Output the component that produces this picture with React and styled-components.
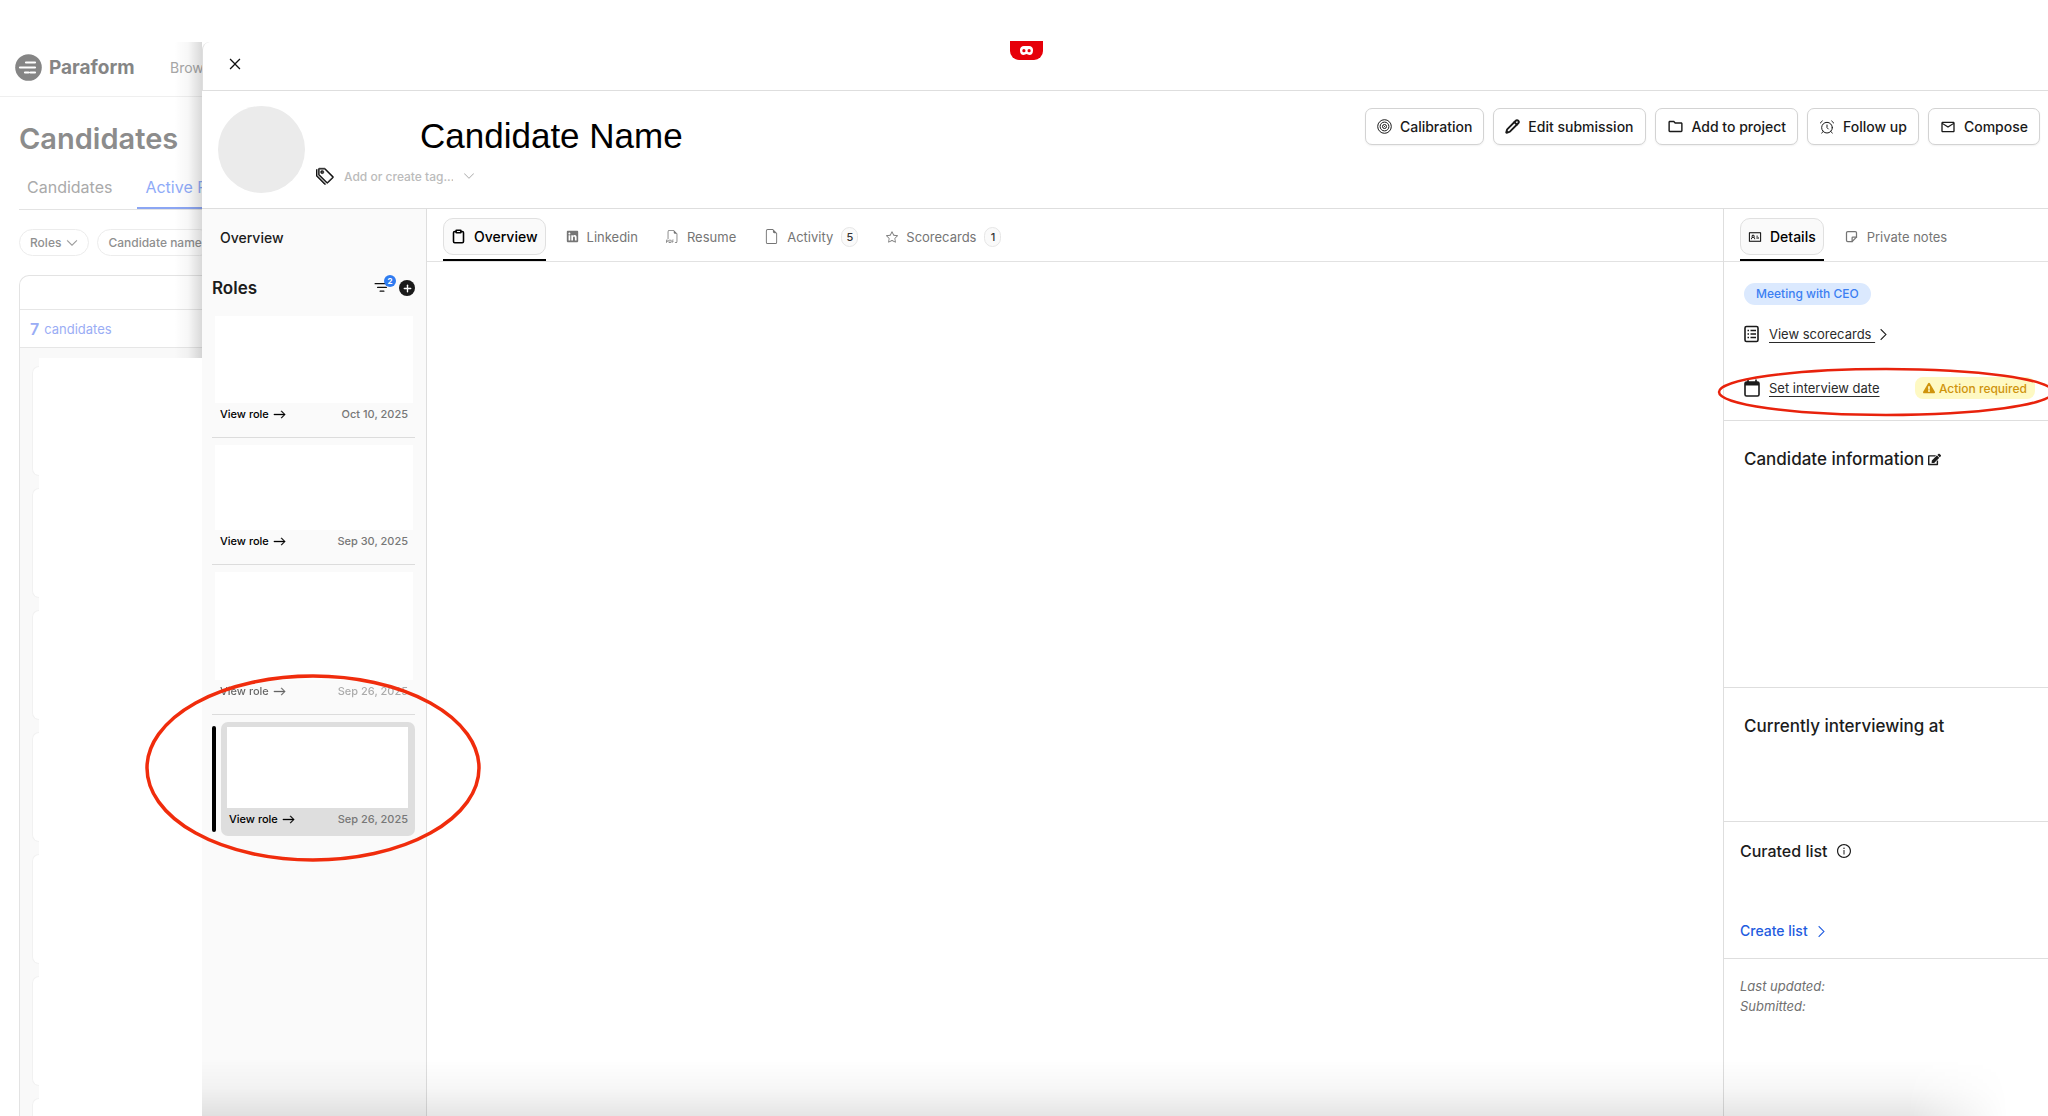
import { createGlobalStyle, styled } from "styled-components";
import { AiOutlineClose, AiOutlineIdcard, AiOutlineInfoCircle } from "react-icons/ai";
import { BsArrowRight, BsChevronDown, BsChevronRight, BsFileEarmark, BsFiletypePdf, BsFilter, BsStar, BsTags } from "react-icons/bs";
import { FaEdit, FaExclamationTriangle, FaLinkedin } from "react-icons/fa";
import { MdMailOutline, MdOutlineFolder } from "react-icons/md";
import { TbNote } from "react-icons/tb";
import { AlarmClock, Clipboard, Pencil, Plus } from "lucide-react";

const GlobalStyle = createGlobalStyle`
  * {
    box-sizing: border-box;
  }
  body {
    margin: 0;
    background: #fff;
    color: #1c1c1c;
    font-family: Inter, "Liberation Sans", sans-serif;
    font-size: 14px;
    overflow-x: hidden;
  }
  button, input {
    font-family: inherit;
  }
  h1, h2, h3, p {
    margin: 0;
  }
  svg {
    display: block;
    flex-shrink: 0;
  }
`;

const Page = styled.div`
  position: relative;
  display: flex;
  min-height: 100vh;
  padding-top: 42px;
  overflow: hidden;
`;

const CameraTab = styled.div`
  position: absolute;
  top: 41px;
  left: 50%;
  width: 33px;
  height: 19px;
  margin-left: -14px;
  border-radius: 0 0 9px 9px;
  background: #e60009;
  display: flex;
  align-items: center;
  justify-content: center;
  z-index: 3;
`;

/* Dimmed page behind the drawer */
const Backdrop = styled.div`
  position: relative;
  flex: 0 0 202px;
  min-width: 0;
  display: flex;
  flex-direction: column;
  overflow: hidden;
  white-space: nowrap;

  &::after {
    content: "";
    position: absolute;
    top: 0;
    right: 0;
    width: 28px;
    height: 316px;
    background: linear-gradient(to right, rgba(0, 0, 0, 0), rgba(0, 0, 0, 0.03) 50%, rgba(0, 0, 0, 0.15));
  }
`;

const SiteHeader = styled.header`
  display: flex;
  align-items: center;
  height: 55px;
  padding: 0 0 4px 15px;
  border-bottom: 1px solid #efefef;
`;

const Brand = styled.a`
  display: flex;
  flex: 0 0 155px;
  align-items: center;
  gap: 7px;
  color: #858585;
  font-size: 19px;
  font-weight: 700;
  text-decoration: none;
`;

const SiteLink = styled.a`
  color: #a6a6a6;
  text-decoration: none;
`;

const PageTitle = styled.h1`
  padding: 22px 0 0 19px;
  color: #8c8c8c;
  font-size: 29px;
  line-height: 40px;
  font-weight: 600;
`;

const PageTabs = styled.nav`
  display: flex;
  margin: 9px 0 0 19px;
  height: 42px;
  border-bottom: 1px solid #e3e3e3;
`;

const PageTab = styled.a`
  flex-shrink: 0;
  padding: 9px 8px 0;
  margin-right: 17px;
  height: 41px;
  color: ${(props) => (props.$active ? "#8fabf8" : "#aaaaaa")};
  border-bottom: 2px solid ${(props) => (props.$active ? "#8ca6f3" : "transparent")};
  font-size: 16px;
  line-height: 20px;
  text-decoration: none;
`;

const Filters = styled.div`
  display: flex;
  gap: 8px;
  margin: 19px 0 0 19px;
`;

const FilterPill = styled.button`
  display: flex;
  flex-shrink: 0;
  align-items: center;
  gap: 5px;
  height: 27px;
  padding: 0 10px;
  border: 1px solid #ececec;
  border-radius: 14px;
  background: #fff;
  color: #8f8f8f;
  font-size: 12px;
  font-weight: 500;
`;

const Board = styled.section`
  flex: 1;
  display: flex;
  flex-direction: column;
  margin: 19px 0 0 19px;
  border: 1px solid #e3e3e3;
  border-width: 1px 0 0 1px;
  border-top-left-radius: 10px;
  overflow: hidden;
`;

const BoardHead = styled.div`
  height: 34px;
  border-bottom: 1px solid #e6e6e6;
`;

const BoardCount = styled.div`
  display: flex;
  align-items: center;
  gap: 5px;
  height: 38px;
  padding-left: 10px;
  border-bottom: 1px solid #e6e6e6;
  color: #9aadf5;
  font-size: 13px;

  b {
    font-size: 16px;
    font-weight: 600;
  }
`;

const BoardBody = styled.div`
  flex: 1;
  display: flex;
  padding-top: 10px;
  background: #f9f9f9;
`;

/* only the left edge of the cards shows */
const BoardCards = styled.div`
  flex: 0 0 19px;
  height: 0;
  padding: 8px 0 0 12px;
  display: flex;
  flex-direction: column;
  gap: 12px;
`;

const BoardCard = styled.div`
  flex: 0 0 110px;
  border: 1px solid #f1f1f1;
  border-right: 0;
  border-radius: 8px 0 0 8px;
  background: #fff;
`;

const BoardBlank = styled.div`
  flex: 1;
  background: #fff;
`;

const Drawer = styled.div`
  position: relative;
  flex: 1;
  min-width: 0;
  display: flex;
  flex-direction: column;
  border-top-left-radius: 8px;
  background: #fff;
`;

const DrawerBar = styled.div`
  display: flex;
  align-items: center;
  height: 49px;
  padding: 0 24px 4px;
  border-bottom: 1px solid #dedede;
  border-left: 1px solid #dedede;
  border-top-left-radius: 8px;
`;

const IconButton = styled.button`
  padding: 0;
  border: 0;
  background: none;
  color: #111;
`;

const Profile = styled.header`
  display: flex;
  align-items: flex-start;
  gap: 11px;
  height: 118px;
  padding: 15px 8px 0 16px;
  border-bottom: 1px solid #dedede;
`;

const Avatar = styled.div`
  flex: 0 0 87px;
  height: 87px;
  border-radius: 50%;
  background: #ebebeb;
`;

const Identity = styled.div`
  flex: 1;
`;

const CandidateName = styled.h1`
  padding: 10px 0 0 104px;
  color: #000;
  font-family: "Liberation Sans", sans-serif;
  font-size: 35px;
  line-height: 40px;
  font-weight: 400;
`;

const TagField = styled.label`
  display: flex;
  align-items: center;
  gap: 10px;
  margin-top: 10px;
  color: #111;

  input {
    width: 109px;
    height: 20px;
    padding: 0;
    border: 0;
    outline: 0;
    font-size: 12px;
    font-weight: 500;
  }
  input::placeholder {
    color: #bbb;
    opacity: 1;
  }
  svg:last-child {
    color: #aaa;
  }
`;

const Actions = styled.div`
  display: flex;
  gap: 9px;
  padding-top: 2px;
`;

const ActionButton = styled.button`
  display: flex;
  align-items: center;
  gap: 8px;
  height: 37px;
  padding: 0 11px;
  border: 1px solid #d3d3d3;
  border-radius: 7px;
  background: #fff;
  box-shadow: 0 1px 2px rgba(0, 0, 0, 0.06);
  color: #1a1a1a;
  font-size: 14px;
  font-weight: 500;
  white-space: nowrap;
`;

const DrawerBody = styled.div`
  flex: 1;
  display: flex;
`;

const Sidebar = styled.aside`
  flex: 0 0 225px;
  padding: 0 11px 0 10px;
  border-right: 1px solid #dedede;
  background: #fafafa;
`;

const SidebarLink = styled.a`
  display: block;
  padding: 19px 8px 0;
  color: #1c1c1c;
  font-size: 14px;
  line-height: 20px;
  font-weight: 500;
  text-decoration: none;
`;

const SidebarHead = styled.div`
  display: flex;
  align-items: center;
  height: 24px;
  margin: 28px 0 16px;
`;

const SidebarTitle = styled.h2`
  flex: 1;
  font-size: 17px;
  font-weight: 600;
`;

const FilterButton = styled(IconButton)`
  position: relative;
  margin-right: 7px;
`;

const FilterCount = styled.span`
  position: absolute;
  top: -3px;
  right: -4px;
  width: 12px;
  height: 12px;
  border-radius: 50%;
  background: #2f7bf0;
  color: #fff;
  font-size: 8px;
  line-height: 12px;
  font-weight: 700;
`;

const AddButton = styled.button`
  display: flex;
  align-items: center;
  justify-content: center;
  width: 16px;
  height: 16px;
  padding: 0;
  border: 0;
  border-radius: 50%;
  background: #1a1a1a;
  color: #fff;
`;

const RoleItem = styled.article`
  position: relative;
  display: flex;
  padding-bottom: ${(props) => (props.$selected ? "0" : "12px")};
  margin-bottom: ${(props) => (props.$selected ? "0" : "7px")};
  border-bottom: ${(props) => (props.$selected ? "0" : "1px solid #dcdcdc")};
`;

const SelectedBar = styled.div`
  width: 4px;
  margin: 4px 5px 4px 0;
  border-radius: 2px;
  background: #000;
`;

const RoleCard = styled.div`
  flex: 1;
  padding: ${(props) => (props.$selected ? "5px 7px 6px 6px" : "0 2px 0 3px")};
  border-radius: 7px;
  background: ${(props) => (props.$selected ? "#dedede" : "transparent")};
`;

const RoleSummary = styled.div`
  height: ${(props) => props.$height}px;
  background: #fff;
`;

const RoleFoot = styled.div`
  display: flex;
  align-items: center;
  justify-content: space-between;
  height: 22px;
  padding: ${(props) => (props.$selected ? "0 0 0 2px" : "0 5px")};
  color: #777;
  font-size: 11px;
  font-weight: 500;
  opacity: ${(props) => (props.$faded ? "0.6" : "1")};
`;

const RoleLink = styled.a`
  display: flex;
  align-items: center;
  gap: 4px;
  color: #000;
  text-decoration: none;
`;

const RoleMark = styled.svg`
  position: absolute;
  top: -49px;
  left: -69px;
  z-index: 2;
  pointer-events: none;
`;

const Main = styled.main`
  flex: 1;
  min-width: 0;
`;

const Tabs = styled.nav`
  display: flex;
  gap: 12px;
  height: 53px;
  padding: 9px 16px 0;
  border-bottom: 1px solid #e2e2e2;
`;

const TabSlot = styled.div`
  height: 43px;
  border-bottom: 2px solid ${(props) => (props.$active ? "#000" : "transparent")};
`;

const Tab = styled.button`
  display: flex;
  align-items: center;
  gap: 8px;
  height: 37px;
  padding: 0 7px;
  border: 1px solid ${(props) => (props.$active ? "#e0e0e0" : "transparent")};
  border-radius: 10px;
  background: ${(props) => (props.$active ? "#fafafa" : "none")};
  color: ${(props) => (props.$active ? "#000" : "#757575")};
  font-size: ${(props) => (props.$active ? "14px" : "13px")};
  font-weight: ${(props) => (props.$active ? "500" : "400")};
  white-space: nowrap;
`;

const Count = styled.span`
  min-width: 17px;
  height: 20px;
  border: 1px solid #e6e6e6;
  border-radius: 9px;
  background: #fafafa;
  color: #333;
  font-size: 11px;
  line-height: 18px;
  font-weight: 500;
  text-align: center;
`;

const Details = styled.aside`
  flex: 0 0 325px;
  min-width: 0;
  border-left: 1px solid #dedede;
`;

const Section = styled.section`
  position: relative;
  height: ${(props) => props.$height}px;
  padding: ${(props) => props.$top}px 13px 0 ${(props) => (props.$wide ? "20px" : "16px")};
  border-bottom: 1px solid #dedede;
`;

const StageBadge = styled.span`
  display: inline-block;
  height: 22px;
  padding: 0 12px;
  border-radius: 11px;
  background: #dbe9fe;
  color: #3c7ff2;
  font-size: 12px;
  line-height: 22px;
  font-weight: 500;
`;

const DetailRow = styled.div`
  display: flex;
  align-items: center;
  height: 22px;
  margin-top: ${(props) => props.$gap}px;
`;

const DetailLink = styled.a`
  margin: 0 2px 0 9px;
  color: #2a2a2a;
  font-size: 13px;
  text-decoration: underline;
  text-underline-offset: 3px;
  white-space: pre;
`;

const Warning = styled.span`
  display: flex;
  align-items: center;
  gap: 4px;
  height: 22px;
  margin-left: auto;
  padding: 0 8px;
  border-radius: 8px;
  background: #fef9c3;
  color: #cf930c;
  font-size: 12px;
  font-weight: 500;
  white-space: nowrap;
`;

const DateMark = styled.svg`
  position: absolute;
  top: 105px;
  left: -8px;
  pointer-events: none;
`;

const SectionTitle = styled.h3`
  display: flex;
  align-items: center;
  gap: ${(props) => (props.$small ? "8px" : "4px")};
  font-size: ${(props) => (props.$small ? "16px" : "17px")};
  line-height: 24px;
  font-weight: 500;
`;

const CreateLink = styled.a`
  display: flex;
  align-items: center;
  gap: 7px;
  margin-top: 58px;
  color: #1f5ce0;
  font-size: 14px;
  line-height: 20px;
  font-weight: 500;
  text-decoration: none;
`;

const Meta = styled.div`
  padding: 17px 16px 0;
  color: #707070;
  font-size: 13px;
  line-height: 20px;
  font-style: italic;
`;

const BottomShade = styled.div`
  position: absolute;
  right: 0;
  bottom: 0;
  left: 0;
  height: 56px;
  background: linear-gradient(to bottom, rgba(0, 0, 0, 0), rgba(0, 0, 0, 0.03) 50%, rgba(0, 0, 0, 0.1));
  mask-image: linear-gradient(to right, #000 0, #000 calc(100% - 140px), transparent calc(100% - 40px));
  pointer-events: none;
`;

const LogoMark = () => (
  <svg width="27" height="27" viewBox="0 0 27 27">
    <circle cx="13.5" cy="13.5" r="13.3" fill="#858585" />
    <path d="M11 8.5h9M5 13.5h15M10 18.5h3.500M15.500 18.500h4.500" stroke="#fff" strokeWidth="2.2" strokeLinecap="round" />
  </svg>
);

const MaskIcon = () => (
  <svg width="13" height="9" viewBox="0 0 13 9">
    <path d="M4 0h5a4 4 0 0 1 4 4.5C13 7.5 11.5 9 9.5 9c-1.4 0-2-1-3-1s-1.6 1-3 1C1.500 9 0 7.5 0 4.5A4 4 0 0 1 4 0Z" fill="#fff" />
    <circle cx="3.9" cy="4.7" r="1.6" fill="#e60009" />
    <circle cx="9.1" cy="4.7" r="1.6" fill="#e60009" />
  </svg>
);

const TargetIcon = () => (
  <svg width="15" height="15" viewBox="0 0 15 15" fill="none" stroke="currentColor">
    <circle cx="7.5" cy="7.5" r="6.8" />
    <circle cx="7.5" cy="7.5" r="4.4" />
    <circle cx="7.5" cy="7.5" r="2" />
    <circle cx="7.5" cy="7.5" r="0.6" fill="currentColor" stroke="none" />
  </svg>
);

const ScorecardIcon = () => (
  <svg width="16" height="18" viewBox="0 0 16 18" fill="none" stroke="#1a1a1a">
    <rect x="1" y="1.5" width="13" height="15" rx="1.5" strokeWidth="1.6" />
    <path d="M6.5 5.5H12M6.5 9H12M6.5 12.5H12M3.5 5.5H5M3.5 9H5M3.5 12.5H5" strokeWidth="1.4" />
  </svg>
);

const CalendarIcon = () => (
  <svg width="16" height="18" viewBox="0 0 16 18" fill="none" stroke="#1a1a1a">
    <rect x="1" y="3" width="14" height="14" rx="1.5" strokeWidth="1.6" />
    <path d="M1 3h14v3.5H1z" fill="#1a1a1a" stroke="none" />
    <path d="M4 0.5v3M12 0.5v3" strokeWidth="1.6" />
  </svg>
);

const actions = [
  { label: "Calibration", icon: <TargetIcon /> },
  { label: "Edit submission", icon: <Pencil size={15} strokeWidth={3} /> },
  { label: "Add to project", icon: <MdOutlineFolder size={17} /> },
  { label: "Follow up", icon: <AlarmClock size={16} strokeWidth={1.5} /> },
  { label: "Compose", icon: <MdMailOutline size={16} /> },
];

const tabs = [
  { label: "Overview", icon: <Clipboard size={15} strokeWidth={2.5} />, active: true },
  { label: "Linkedin", icon: <FaLinkedin size={13} /> },
  { label: "Resume", icon: <BsFiletypePdf size={13} /> },
  { label: "Activity", icon: <BsFileEarmark size={15} />, count: 5 },
  { label: "Scorecards", icon: <BsStar size={12} />, count: 1 },
];

const detailTabs = [
  { label: "Details", icon: <AiOutlineIdcard size={14} />, active: true },
  { label: "Private notes", icon: <TbNote size={15} /> },
];

const roles = [
  { id: 1, date: "Oct 10, 2025", height: 87 },
  { id: 2, date: "Sep 30, 2025", height: 85 },
  { id: 3, date: "Sep 26, 2025", height: 108, faded: true },
  { id: 4, date: "Sep 26, 2025", height: 81, selected: true },
];

function TabBar({ items }) {
  return (
    <Tabs>
      {items.map((tab) => (
        <TabSlot key={tab.label} $active={tab.active}>
          <Tab $active={tab.active}>
            {tab.icon}
            {tab.label}
            {tab.count && <Count>{tab.count}</Count>}
          </Tab>
        </TabSlot>
      ))}
    </Tabs>
  );
}

function Role({ date, height, faded, selected }) {
  return (
    <RoleItem $selected={selected}>
      {selected && <SelectedBar />}
      <RoleCard $selected={selected}>
        <RoleSummary $height={height} />
        <RoleFoot $selected={selected} $faded={faded}>
          <RoleLink href="#">
            View role <BsArrowRight size={13} strokeWidth={0.5} />
          </RoleLink>
          <time>{date}</time>
        </RoleFoot>
      </RoleCard>
      {selected && (
        <RoleMark width="340" height="190" viewBox="0 0 340 190" fill="none">
          <ellipse cx="170" cy="95" rx="166" ry="92" stroke="#f02c0c" strokeWidth="3.5" />
        </RoleMark>
      )}
    </RoleItem>
  );
}

function CandidatesPage() {
  return (
    <Backdrop>
      <SiteHeader>
        <Brand href="#">
          <LogoMark />
          Paraform
        </Brand>
        <SiteLink href="#">Browse</SiteLink>
      </SiteHeader>
      <PageTitle>Candidates</PageTitle>
      <PageTabs>
        <PageTab href="#">Candidates</PageTab>
        <PageTab href="#" $active>
          Active Roles
        </PageTab>
      </PageTabs>
      <Filters>
        <FilterPill>
          Roles <BsChevronDown size={12} strokeWidth={0.5} />
        </FilterPill>
        <FilterPill>Candidate name</FilterPill>
      </Filters>
      <Board>
        <BoardHead />
        <BoardCount>
          <b>7</b> candidates
        </BoardCount>
        <BoardBody>
          <BoardCards>
            {[1, 2, 3, 4, 5, 6, 7].map((n) => (
              <BoardCard key={n} />
            ))}
          </BoardCards>
          <BoardBlank />
        </BoardBody>
      </Board>
    </Backdrop>
  );
}

export default function App() {
  return (
    <Page>
      <GlobalStyle />
      <CameraTab>
        <MaskIcon />
      </CameraTab>
      <CandidatesPage />
      <Drawer>
        <DrawerBar>
          <IconButton aria-label="Close">
            <AiOutlineClose size={16} />
          </IconButton>
        </DrawerBar>
        <Profile>
          <Avatar />
          <Identity>
            <CandidateName>Candidate Name</CandidateName>
            <TagField>
              <BsTags size={18} strokeWidth={0.4} />
              <input placeholder="Add or create tag..." aria-label="Tags" />
              <BsChevronDown size={12} />
            </TagField>
          </Identity>
          <Actions>
            {actions.map((action) => (
              <ActionButton key={action.label}>
                {action.icon}
                {action.label}
              </ActionButton>
            ))}
          </Actions>
        </Profile>
        <DrawerBody>
          <Sidebar>
            <SidebarLink href="#">Overview</SidebarLink>
            <SidebarHead>
              <SidebarTitle>Roles</SidebarTitle>
              <FilterButton aria-label="Filter roles">
                <BsFilter size={20} />
                <FilterCount>2</FilterCount>
              </FilterButton>
              <AddButton aria-label="Add role">
                <Plus size={11} strokeWidth={3} />
              </AddButton>
            </SidebarHead>
            {roles.map((role) => (
              <Role key={role.id} {...role} />
            ))}
          </Sidebar>
          <Main>
            <TabBar items={tabs} />
          </Main>
          <Details>
            <TabBar items={detailTabs} />
            <Section $height={159} $top={21} $wide>
              <StageBadge>Meeting with CEO</StageBadge>
              <DetailRow $gap={18}>
                <ScorecardIcon />
                <DetailLink href="#">{"View scorecards "}</DetailLink>
                <BsChevronRight size={13} strokeWidth={0.5} />
              </DetailRow>
              <DetailRow $gap={32}>
                <CalendarIcon />
                <DetailLink href="#">Set interview date</DetailLink>
                <Warning>
                  <FaExclamationTriangle size={12} />
                  Action required
                </Warning>
              </DetailRow>
              <DateMark width="340" height="50" viewBox="0 0 340 50" fill="none">
                <ellipse cx="170" cy="25" rx="167" ry="23" stroke="#e8220c" strokeWidth="2.5" />
              </DateMark>
            </Section>
            <Section $height={267} $top={26} $wide>
              <SectionTitle>
                Candidate information <FaEdit size={13} />
              </SectionTitle>
            </Section>
            <Section $height={134} $top={26} $wide>
              <SectionTitle>Currently interviewing at</SectionTitle>
            </Section>
            <Section $height={137} $top={17}>
              <SectionTitle $small>
                Curated list <AiOutlineInfoCircle size={16} />
              </SectionTitle>
              <CreateLink href="#">
                Create list <BsChevronRight size={13} strokeWidth={0.5} />
              </CreateLink>
            </Section>
            <Meta>
              <p>Last updated:</p>
              <p>Submitted:</p>
            </Meta>
          </Details>
        </DrawerBody>
        <BottomShade />
      </Drawer>
    </Page>
  );
}
